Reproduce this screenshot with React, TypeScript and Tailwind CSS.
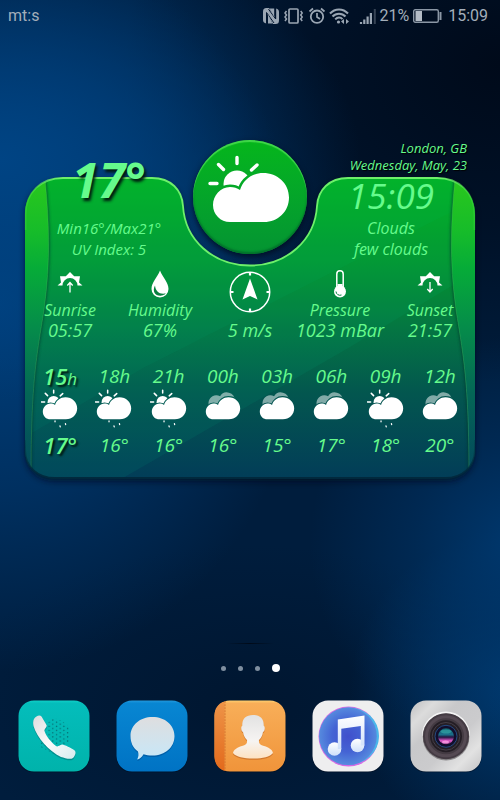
import React, { useId } from "react";

type Sky = "sun-rain" | "clouds";

const hours: { hour: string; sky: Sky; temp: string; current?: boolean }[] = [
  { hour: "15", sky: "sun-rain", temp: "17°", current: true },
  { hour: "18", sky: "sun-rain", temp: "16°" },
  { hour: "21", sky: "sun-rain", temp: "16°" },
  { hour: "00", sky: "clouds", temp: "16°" },
  { hour: "03", sky: "clouds", temp: "15°" },
  { hour: "06", sky: "clouds", temp: "17°" },
  { hour: "09", sky: "sun-rain", temp: "18°" },
  { hour: "12", sky: "clouds", temp: "20°" },
];

const CLOUD =
  "M22 67C12.500 67 5 59.500 5 50C5 40.500 12.500 32 22 32C26 32 29 33 32 35C35 25 44 18 55 18C69.500 18 81 28.500 81 42.500C81 56.500 70 67 56 67Z";

function SkyIcon({ sky, rain, className }: { sky: "sun" | "clouds"; rain?: boolean; className: string }) {
  const id = useId();
  return (
    <svg viewBox={rain === undefined ? "0 0 84 68" : "1 0 84 86"} className={className} aria-hidden="true">
      <mask id={id} maskUnits="userSpaceOnUse" x="0" y="0" width="90" height="90">
        <rect width="90" height="90" fill="#fff" />
        <path d={CLOUD} fill="#000" stroke="#000" strokeWidth="5" />
      </mask>
      {sky === "sun" ? (
        <>
          <circle cx="29" cy="29" r="13.500" fill="#fff" mask={`url(#${id})`} />
          <path
            d="M2 28.500H9M10.500 9.500L15.500 14.500M29 2.500V8.500M49 10L43.500 15"
            stroke="#fff"
            strokeWidth="3.400"
            strokeLinecap="round"
          />
        </>
      ) : (
        <g mask={`url(#${id})`} opacity="0.5" fill="#fff">
          <path d="M11 30A17 17 0 0 1 36.500 16A17.500 17.500 0 0 1 69 25V40H11Z" />
        </g>
      )}
      <path d={CLOUD} fill="#fff" />
      {rain && (
        <path d="M32 70.500V72.500M43 81.500L43.500 83.500M55 76.500L55.500 78.500" stroke="#fff" strokeWidth="2.800" strokeLinecap="round" />
      )}
    </svg>
  );
}

function SunEdgeIcon({ down }: { down?: boolean }) {
  return (
    <svg viewBox="0 0 26 26" className="size-[26px]" fill="none" aria-hidden="true">
      <path
        d="M0.500 14.500L4 11.500L3 5.200L8.800 5.200L13 1L17.200 5.200L23 5.200L22 11.500L25.500 14.500H20.500A7.500 7.500 0 0 0 5.500 14.500Z"
        fill="#fff"
      />
      <path
        d={down ? "M13 11V21M10.300 18L13 21L15.700 18" : "M13 21.500V11.500M10.300 14.500L13 11.500L15.700 14.500"}
        stroke="#fff"
        strokeWidth="1.300"
      />
    </svg>
  );
}

function DropIcon() {
  return (
    <svg viewBox="0 0 18 28" className="h-[28px] w-[18px]" aria-hidden="true">
      <path d="M9 0.500C11.500 7 17.500 12.500 17.500 19A8.500 8.500 0 0 1 0.500 19C0.500 12.500 6.500 7 9 0.500Z" fill="#fff" />
      <path d="M4 15.500C1 21 4 26 9.500 25.800C13 25.600 15.200 23.300 15.200 23.300C9 25 4.500 21.500 4 15.500Z" fill="#078040" />
    </svg>
  );
}

function CompassIcon() {
  return (
    <svg viewBox="0 0 42 42" className="size-[42px]" fill="none" aria-hidden="true">
      <circle cx="21" cy="21" r="19.700" stroke="#fff" strokeWidth="1.500" />
      <path d="M21 1V4.500M21 37.500V41M1 21H4.500M37.500 21H41" stroke="#fff" strokeWidth="2.200" />
      <path d="M21 7.500L28.500 28.500L21 25L13.500 28.500Z" fill="#fff" />
    </svg>
  );
}

function ThermometerIcon() {
  return (
    <svg viewBox="0 0 14 28" className="h-[28px] w-[14px]" fill="none" aria-hidden="true">
      <path d="M3.800 17.500V4A3.200 3.200 0 0 1 10.200 4V17.500" stroke="#fff" strokeWidth="1.500" />
      <path d="M4.500 14H9.500V18H4.500Z" fill="#fff" />
      <circle cx="7" cy="21.500" r="6" fill="#fff" />
      <path d="M3 21.500A4 4 0 0 0 8.500 25" stroke="#078040" strokeWidth="1" />
    </svg>
  );
}

function WidgetShape() {
  const body =
    "M0 75C0 52 16 38 38 38H127C146 38 157 50 158 66C160 100 188 125.500 225 125.500C262 125.500 290 100 292 66C293 50 304 38 323 38H412C434 38 450 52 450 75V310C450 327 437 338.500 420 338.500H30C13 338.500 0 327 0 310Z";
  const topEdge =
    "M0.500 90V75C0.500 52 16 38 38 38H127C146 38 157 50 158 66C160 100 188 125.500 225 125.500C262 125.500 290 100 292 66C293 50 304 38 323 38H412C434 38 449.500 52 449.500 75V90";
  const flap = "M0 38H20C24 80 26 120 19 170C12 215 6 240 6 338H0Z";
  return (
    <svg
      viewBox="0 0 450 340"
      preserveAspectRatio="none"
      className="absolute inset-0 h-full w-full overflow-visible"
      aria-hidden="true"
    >
      <defs>
        <linearGradient id="body-fill" gradientUnits="userSpaceOnUse" x1="0" y1="38" x2="0" y2="338">
          <stop offset="0" stopColor="#04b01c" />
          <stop offset="0.280" stopColor="#04952f" />
          <stop offset="0.500" stopColor="#047642" />
          <stop offset="0.720" stopColor="#03564f" />
          <stop offset="1" stopColor="#023d58" />
        </linearGradient>
        <linearGradient id="flap-fill" gradientUnits="userSpaceOnUse" x1="0" y1="38" x2="0" y2="338">
          <stop offset="0" stopColor="#2ac81c" />
          <stop offset="0.180" stopColor="#16bc2a" />
          <stop offset="0.300" stopColor="#06ac38" />
          <stop offset="0.500" stopColor="#058c4a" />
          <stop offset="0.720" stopColor="#046656" />
          <stop offset="1" stopColor="#03465c" />
        </linearGradient>
        <linearGradient id="rim" gradientUnits="userSpaceOnUse" x1="0" y1="0" x2="450" y2="0">
          <stop offset="0" stopColor="#6df06a" stopOpacity="0.150" />
          <stop offset="0.070" stopColor="#6df06a" />
          <stop offset="0.930" stopColor="#6df06a" />
          <stop offset="1" stopColor="#6df06a" stopOpacity="0.150" />
        </linearGradient>
        <linearGradient id="base" gradientUnits="userSpaceOnUse" x1="0" y1="290" x2="0" y2="340">
          <stop offset="0" stopColor="#01283c" stopOpacity="0" />
          <stop offset="1" stopColor="#01283c" />
        </linearGradient>
        <clipPath id="body-clip">
          <path d={body} />
        </clipPath>
        <filter id="soft" x="-5%" y="-5%" width="110%" height="112%">
          <feGaussianBlur stdDeviation="3" />
        </filter>
        <filter id="crease-blur" x="-50%" y="-5%" width="200%" height="110%">
          <feGaussianBlur stdDeviation="1.500" />
        </filter>
      </defs>
      <path d={body} fill="#000a1c" opacity="0.650" filter="url(#soft)" transform="translate(0 3)" />
      <path d={body} fill="url(#body-fill)" />
      <g clipPath="url(#body-clip)">
        <path d="M0 0H450V60L118 228L0 297Z" fill="#0c8" opacity="0.060" />
        <path d="M0 0H450V132L325 207L98 338H0Z" fill="#0c8" opacity="0.080" />
        {["", "matrix(-1 0 0 1 450 0)"].map((flip) => (
          <g key={flip} transform={flip || undefined}>
            <path d={flap} fill="#00382c" opacity="0.700" filter="url(#crease-blur)" transform="translate(1 0)" />
            <path d={flap} fill="url(#flap-fill)" />
            <path d="M20 38C24 80 26 120 19 170C12 215 6 240 6 338" fill="none" stroke="#5fe06a" strokeOpacity="0.250" />
          </g>
        ))}
      </g>
      <path d={topEdge} fill="none" stroke="url(#rim)" strokeWidth="1.800" />
      <path d="M0 300V310C0 327 13 338 30 338H420C437 338 450 327 450 310V300" fill="none" stroke="url(#base)" strokeWidth="2" />
    </svg>
  );
}

function StatusIcons() {
  return (
    <svg viewBox="0 0 114 18" className="h-[18px] w-[114px]" fill="none" stroke="#9aa6b3" aria-hidden="true">
      <path d="M3.500 1H6L13 12V1.500C15 2 16 3 16 5V13C16 16 15 17 12.500 17H10L3.500 6V16.500C1 16 0 15 0 13V5C0 2 1 1 3.500 1Z" fill="#9aa6b3" stroke="none" />
      <path d="M3.500 16.800V5.500L11 16M12.700 1.200V12L5.500 2.200" stroke="#02152e" strokeWidth="1" />
      <path d="M5 7.500V16.500H9.500ZM11.200 10V1.500H6.500Z" fill="#9aa6b3" stroke="none" />
      <rect x="26" y="2" width="9" height="14" rx="1" strokeWidth="1.700" />
      <path d="M23.500 4L22 6L23.500 8L22 10L23.500 12L22 14M37.700 4L39.200 6L37.700 8L39.200 10L37.700 12L39.200 14" strokeWidth="1.500" />
      <circle cx="54" cy="9.700" r="6.200" strokeWidth="1.800" />
      <path d="M54 6V10L57 12M46.500 4.500L50 1.500M58 1.500L61.500 4.500" strokeWidth="1.700" />
      <path d="M67 6.500C72 1 80 1 85 6.500M69.500 9.500C73 5.700 79 5.700 82.500 9.500M72.200 12.400C74.500 10 77.500 10 79.500 12.200" strokeWidth="2" />
      <circle cx="75.500" cy="15" r="1.600" fill="#9aa6b3" stroke="none" />
      <path d="M78 14.500L81 12V17ZM86 14.500L83 12V17Z" fill="#9aa6b3" stroke="none" />
      <path d="M98 17V15M101.300 17V12.500M104.600 17V9.500M107.900 17V6" strokeWidth="2.200" />
      <path d="M111.800 17V2" strokeWidth="2" strokeOpacity="0.350" />
    </svg>
  );
}

function BatteryIcon() {
  return (
    <svg viewBox="0 0 29 14" className="h-[14px] w-[29px]" fill="none" aria-hidden="true">
      <rect x="0.700" y="0.700" width="24.600" height="12.600" rx="1.500" stroke="#8b97a5" strokeWidth="1.400" />
      <rect x="2.500" y="2" width="6.500" height="10" fill="#b4bcc6" />
      <path d="M27.500 3V11" stroke="#8b97a5" strokeWidth="2" />
    </svg>
  );
}

function Tile({ fill, children }: { fill: string; children: React.ReactNode }) {
  return (
    <svg viewBox="0 0 72 72" className="size-full overflow-visible" aria-hidden="true">
      <rect x="0.500" y="0.500" width="71" height="71" rx="15" fill="#000a18" opacity="0.500" transform="translate(0 0.800)" />
      <rect x="0.500" y="0.500" width="71" height="71" rx="15.500" fill={fill} />
      {children}
    </svg>
  );
}

function PhoneArt() {
  const handset =
    "M16 19C18 15.500 22 14.500 23.500 16.500L28.500 25C29.500 27 26 29 26.500 31C28 36 33 42 38 46C40 47.500 42 44.500 44.500 44.500C46 44.500 54 48.500 56 50C59 52 57 56 55 58C52 60 47 58 43 57C31 51 19 38 15.500 26C15 23 15 21 16 19Z";
  return (
    <Tile fill="url(#phone-bg)">
      <defs>
        <linearGradient id="phone-bg" x1="0" y1="0" x2="0" y2="1">
          <stop offset="0" stopColor="#10d0c8" />
          <stop offset="0.040" stopColor="#04bdbb" />
          <stop offset="1" stopColor="#00b3ab" />
        </linearGradient>
        <linearGradient id="handset" x1="0" y1="0" x2="1" y2="1">
          <stop offset="0" stopColor="#dcdcde" />
          <stop offset="0.500" stopColor="#fbfbfb" />
          <stop offset="1" stopColor="#d4ecee" />
        </linearGradient>
        <pattern id="speaker" width="7.400" height="4.200" patternUnits="userSpaceOnUse">
          <circle cx="1.500" cy="1.100" r="0.750" fill="#046f73" />
          <circle cx="5.200" cy="3.200" r="0.750" fill="#046f73" />
        </pattern>
      </defs>
      <path d="M36 18L44 21L52 27V42L44 46L36 54L21 46L28 36V24Z" fill="url(#speaker)" />
      <path d={handset} fill="#034f55" opacity="0.350" transform="translate(0 1.500)" />
      <path d={handset} fill="url(#handset)" />
    </Tile>
  );
}

function MessageArt() {
  const bubble =
    "M36.500 17C49 17 58.500 25 58.500 36C58.500 47.500 49 55.500 36.500 55.500C33 55.500 30 55 27.500 54.200C26 57 23.500 59 21.200 59.500C22.500 57 22.800 54.500 22 51.500C17 48 14.500 42.500 14.500 36C14.500 25 24 17 36.500 17Z";
  return (
    <Tile fill="url(#msg-bg)">
      <defs>
        <linearGradient id="msg-bg" x1="0" y1="0" x2="0" y2="1">
          <stop offset="0" stopColor="#2299dd" />
          <stop offset="0.040" stopColor="#0886d2" />
          <stop offset="1" stopColor="#0073c4" />
        </linearGradient>
        <linearGradient id="bubble" x1="0" y1="0" x2="0" y2="1">
          <stop offset="0" stopColor="#dededf" />
          <stop offset="1" stopColor="#c7e7f8" />
        </linearGradient>
      </defs>
      <path d={bubble} fill="#013f80" opacity="0.400" transform="translate(0 1.500)" />
      <path d={bubble} fill="url(#bubble)" />
    </Tile>
  );
}

function ContactsArt() {
  const person =
    "M39 15C46 15 50 18.500 49.800 26C51.500 26.500 50.800 31.500 49 32C48.500 36 46.500 38.500 45 40C44.500 44 46 45 50 46C55 47.500 58.500 50 59 53C56 57 48 58.500 39 58.500C30 58.500 22 57 19 53C19.500 50 23 47.500 28 46C32 45 33.500 44 33 40C31.500 38.500 29.500 36 29 32C27.200 31.500 26.500 26.500 28.200 26C28 18.500 32 15 39 15Z";
  return (
    <Tile fill="url(#book)">
      <defs>
        <linearGradient id="book" x1="0" y1="0" x2="0" y2="1">
          <stop offset="0" stopColor="#ffd071" />
          <stop offset="0.040" stopColor="#f8ae58" />
          <stop offset="1" stopColor="#f0943a" />
        </linearGradient>
        <linearGradient id="spine" x1="0" y1="0" x2="0" y2="1">
          <stop offset="0" stopColor="#ee9448" />
          <stop offset="1" stopColor="#e26a1c" />
        </linearGradient>
        <linearGradient id="person" x1="0" y1="0" x2="0" y2="1">
          <stop offset="0" stopColor="#e2e2e2" />
          <stop offset="0.600" stopColor="#f6f4f2" />
          <stop offset="1" stopColor="#fde2c2" />
        </linearGradient>
      </defs>
      <path d="M10.500 1.500V70.700C4 69 0.500 63 0.500 56.500V15.500C0.500 9 4 3 10.500 1.500Z" fill="url(#spine)" />
      <path d="M11 1.200V70.800" stroke="#d2702c" strokeWidth="0.900" strokeDasharray="2 1" />
      <path d={person} fill="#a8521a" opacity="0.450" transform="translate(0 1.300)" />
      <path d={person} fill="url(#person)" />
    </Tile>
  );
}

function MusicArt() {
  return (
    <Tile fill="#eeeeef">
      <defs>
        <radialGradient id="disc">
          <stop offset="0" stopColor="#4050cc" />
          <stop offset="0.550" stopColor="#4464d4" />
          <stop offset="1" stopColor="#568ade" />
        </radialGradient>
        <linearGradient id="note" x1="0" y1="0" x2="0" y2="1">
          <stop offset="0" stopColor="#ffffff" />
          <stop offset="1" stopColor="#cfe0fa" />
        </linearGradient>
      </defs>
      <circle cx="36.500" cy="36.500" r="30" fill="#d468e4" />
      <ellipse cx="37.200" cy="36" rx="29.800" ry="28.500" fill="#49b8ea" />
      <circle cx="36" cy="36.300" r="28.800" fill="url(#disc)" />
      <g fill="url(#note)">
        <circle cx="22.500" cy="49" r="6.800" />
        <circle cx="45.500" cy="45.500" r="6.800" />
        <path d="M25.800 19.500L52.500 15.500V45.500H48.800V26L29.300 28.800V49H25.800Z" />
      </g>
    </Tile>
  );
}

function CameraArt() {
  return (
    <Tile fill="url(#metal)">
      <defs>
        <linearGradient id="metal" x1="0" y1="0" x2="1" y2="1">
          <stop offset="0" stopColor="#bdbdbf" />
          <stop offset="0.180" stopColor="#dcdcdc" />
          <stop offset="0.350" stopColor="#c8c8ca" />
          <stop offset="0.600" stopColor="#cbcbcd" />
          <stop offset="0.800" stopColor="#e2e2e2" />
          <stop offset="1" stopColor="#c3c3c5" />
        </linearGradient>
        <linearGradient id="glass" x1="0" y1="0" x2="0" y2="1">
          <stop offset="0" stopColor="#12606c" />
          <stop offset="0.400" stopColor="#1b6f8a" />
          <stop offset="0.550" stopColor="#221440" />
          <stop offset="0.780" stopColor="#e45ccc" />
          <stop offset="1" stopColor="#602060" />
        </linearGradient>
      </defs>
      <circle cx="36" cy="35.500" r="24" fill="#f4f4f4" />
      <circle cx="36" cy="37" r="23.500" fill="#8c8a8c" />
      <circle cx="36" cy="36.300" r="23" fill="#443b43" />
      <circle cx="36" cy="36.300" r="19.500" fill="none" stroke="#554a53" strokeWidth="3" />
      <circle cx="36" cy="36.300" r="16" fill="#241e25" />
      <circle cx="36" cy="36.300" r="13.800" fill="none" stroke="#463e47" strokeWidth="1" />
      <circle cx="36" cy="36.300" r="11" fill="#120e2c" stroke="#254a80" strokeWidth="1" />
      <circle cx="36" cy="36.300" r="8" fill="url(#glass)" />
      <ellipse cx="36" cy="31.500" rx="5.500" ry="2" fill="#3bb6b2" opacity="0.550" />
      <ellipse cx="35.500" cy="42" rx="3.500" ry="1.600" fill="#ff9ae6" opacity="0.850" />
    </Tile>
  );
}

const apps = [
  { name: "Phone", art: <PhoneArt /> },
  { name: "Messages", art: <MessageArt /> },
  { name: "Contacts", art: <ContactsArt /> },
  { name: "Music", art: <MusicArt /> },
  { name: "Camera", art: <CameraArt /> },
];

function Condition({ icon, label, value }: { icon: React.ReactNode; label?: string; value: string }) {
  return (
    <div className="flex flex-col items-center whitespace-nowrap">
      {label ? (
        <>
          <div className="flex h-8 items-center">{icon}</div>
          <dt className="text-base leading-5">{label}</dt>
        </>
      ) : (
        <dt aria-label="Wind" className="flex h-[52px] items-center pb-1">
          {icon}
        </dt>
      )}
      <dd className="text-[18px] leading-5">{value}</dd>
    </div>
  );
}

export default function App() {
  return (
    <div className="flex min-h-screen flex-col bg-[#001d3d] bg-[radial-gradient(ellipse_72%_30%_at_0%_20%,#004484_0%,#00448490_45%,transparent_100%),radial-gradient(ellipse_62%_46%_at_0%_38%,#003f7c_0%,#003f7c90_50%,transparent_100%),radial-gradient(ellipse_42%_26%_at_104%_68%,#00386e_0%,#00386e70_50%,transparent_100%),radial-gradient(ellipse_34%_20%_at_104%_86%,#003a70_0%,transparent_100%),radial-gradient(ellipse_75%_40%_at_100%_8%,#000a1a_0%,#000a1aa0_50%,transparent_100%),radial-gradient(ellipse_60%_20%_at_50%_88%,#001630_0%,transparent_100%)] font-['Open_Sans',sans-serif]">
      <header className="flex h-8 items-center justify-between pr-3 pl-2 font-[Roboto,sans-serif] text-base text-[#a3aeba]">
        <span>mt:s</span>
        <div className="flex items-center">
          <StatusIcons />
          <span className="ml-0.5">21%</span>
          <span className="ml-1">
            <BatteryIcon />
          </span>
          <time className="ml-1.5">15:09</time>
        </div>
      </header>

      <main className="mt-[108px] px-[25px]">
        <section aria-label="Weather" className="relative mx-auto w-full max-w-[450px] text-[#66fb8c] italic">
          <WidgetShape />
          <div className="relative">
            <div className="grid grid-cols-[1fr_114px_1fr] text-center whitespace-nowrap">
              <div className="pt-4">
                <p className="text-[48px] leading-[48px] font-bold [text-shadow:2px_3px_3px_#001a10]">17°</p>
                <p className="mt-[14px] text-[15px] leading-[21px]">Min16°/Max21°</p>
                <p className="text-[15px] leading-[21px]">UV Index: 5</p>
              </div>
              <button
                type="button"
                aria-label="Few clouds, refresh"
                className="flex size-[114px] items-center justify-center rounded-full bg-linear-to-b from-[#05b61a] to-[#049432] pb-4 shadow-[0_3px_6px_#000a1ccc,inset_0_2px_1px_#6df06a99,inset_0_-2px_2px_#02702a]"
              >
                <SkyIcon sky="sun" className="h-[68px] w-[84px]" />
              </button>
              <div>
                <div className="pr-2 text-right text-[13px] leading-[17px] [text-shadow:1px_1px_1px_#000]">
                  <p>London, GB</p>
                  <p>Wednesday, May, 23</p>
                </div>
                <p className="text-[35px] leading-[44px]">15:09</p>
                <p className="text-base leading-[21px]">Clouds</p>
                <p className="text-base leading-[21px]">few clouds</p>
              </div>
            </div>

            <dl className="mt-2 grid grid-cols-5">
              <Condition icon={<SunEdgeIcon />} label="Sunrise" value="05:57" />
              <Condition icon={<DropIcon />} label="Humidity" value="67%" />
              <Condition icon={<CompassIcon />} value="5 m/s" />
              <Condition icon={<ThermometerIcon />} label="Pressure" value="1023 mBar" />
              <Condition icon={<SunEdgeIcon down />} label="Sunset" value="21:57" />
            </dl>

            <ol className="mt-6 grid grid-cols-8 px-2 pb-[18px]">
              {hours.map(({ hour, sky, temp, current }) => (
                <li key={hour} className="flex flex-col items-center">
                  <p
                    className={
                      current
                        ? "flex h-6 items-baseline text-[22px] leading-6 font-semibold [text-shadow:2px_2px_2px_#001a10]"
                        : "h-6 text-[19px] leading-6"
                    }
                  >
                    {hour}
                    <span className={current ? "text-[17px] leading-6 font-normal" : ""}>h</span>
                  </p>
                  <div className="flex h-10 items-end">
                    <SkyIcon sky={sky === "clouds" ? "clouds" : "sun"} rain={sky === "sun-rain"} className="h-[39px] w-[38px]" />
                  </div>
                  <p
                    className={
                      current
                        ? "text-[22px] leading-[34px] font-semibold [text-shadow:2px_2px_2px_#001a10]"
                        : "text-[19px] leading-[34px]"
                    }
                  >
                    {temp}
                  </p>
                </li>
              ))}
            </ol>
          </div>
        </section>
      </main>

      <footer className="mt-auto flex flex-col items-center pb-7">
        <div className="h-px w-12 bg-linear-to-r from-transparent via-[#000a18] to-transparent" />
        <div className="mt-5 flex h-2 items-center gap-3">
          <span className="size-[5px] rounded-full bg-[#7f8fa0]" />
          <span className="size-[5px] rounded-full bg-[#7f8fa0]" />
          <span className="size-[5px] rounded-full bg-[#7f8fa0]" />
          <span className="size-2 rounded-full bg-white" />
        </div>
        <nav aria-label="Dock" className="mt-7 flex w-full justify-between px-[18px]">
          {apps.map(({ name, art }) => (
            <button key={name} type="button" aria-label={name} className="size-[72px]">
              {art}
            </button>
          ))}
        </nav>
      </footer>
    </div>
  );
}
